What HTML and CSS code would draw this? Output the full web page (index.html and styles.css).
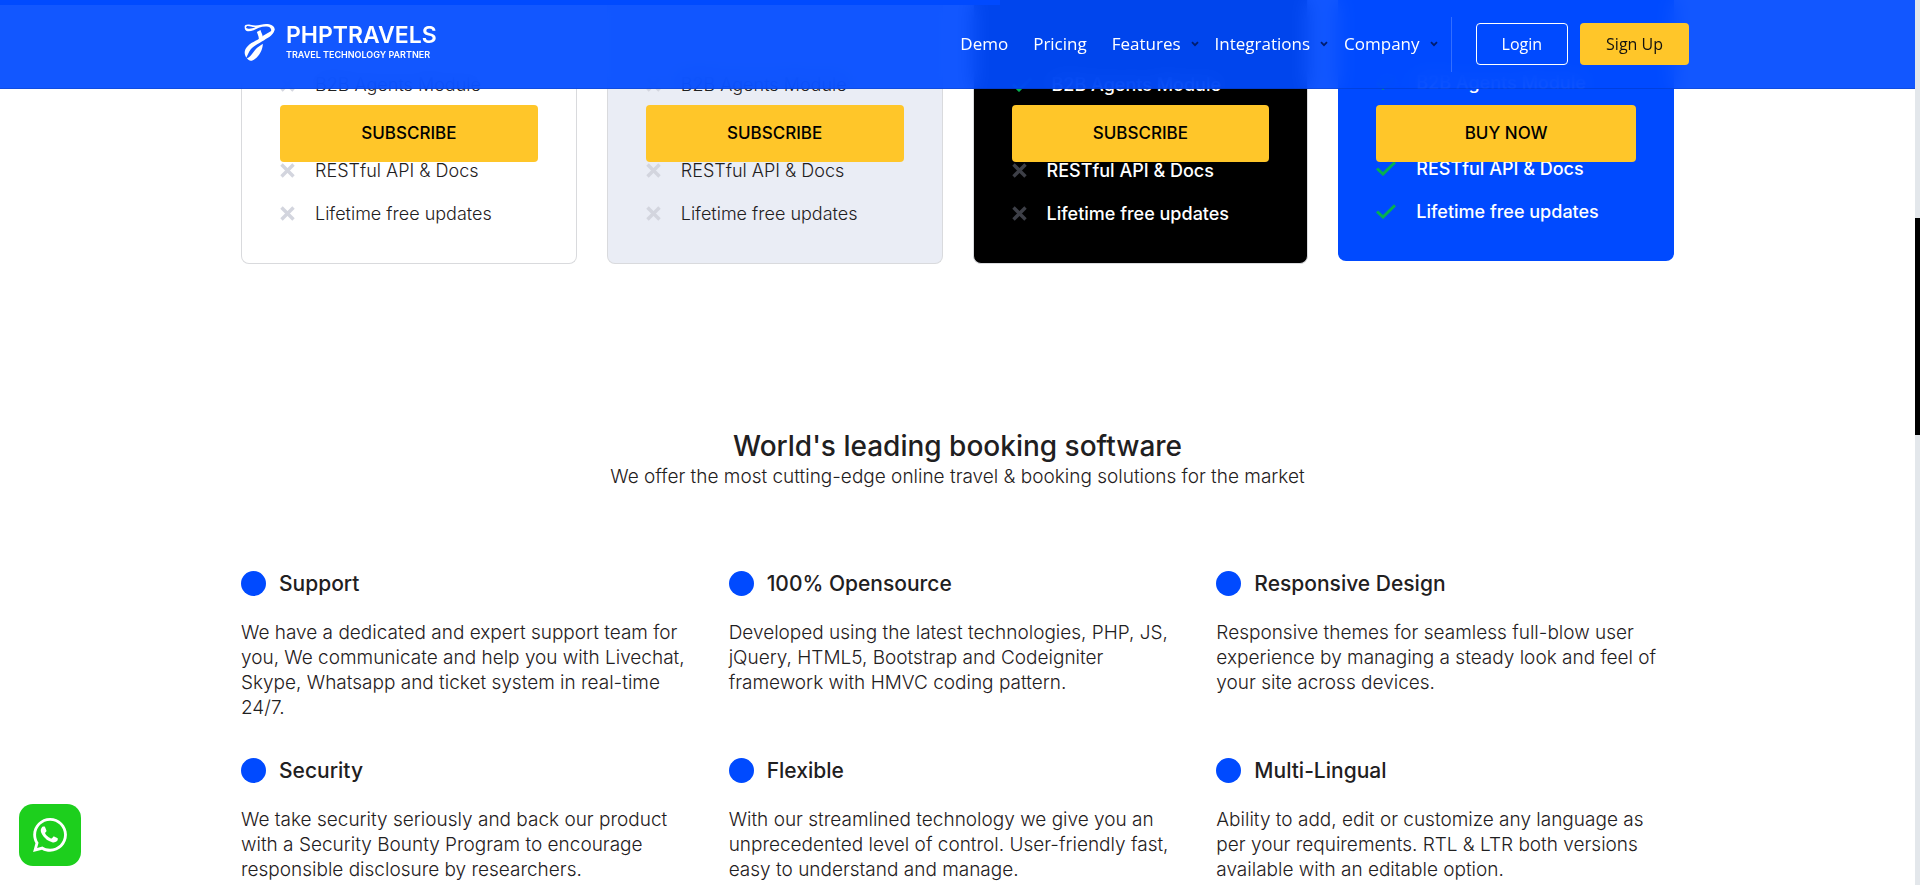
FILE: index.html
```html
<!DOCTYPE html>
<html lang="en">
<head>
<meta charset="utf-8">
<meta name="viewport" content="width=device-width, initial-scale=1">
<title>PHPTRAVELS</title>
<link rel="stylesheet" href="styles.css">
</head>
<body>
<svg class="sprite" aria-hidden="true">
  <symbol id="cross" viewBox="0 0 15 15"><path d="M1.5 1.5 13.500 13.500M13.500 1.500 1.500 13.500" stroke="currentColor" stroke-width="3.400" fill="none"/></symbol>
  <symbol id="check" viewBox="0 0 20 15"><path d="M1 7.500 7 13 19 1.200" stroke="currentColor" stroke-width="3" fill="none"/></symbol>
  <symbol id="chevron" viewBox="0 0 8 6"><path d="M1 1.200 4 4.200 7 1.200" stroke="currentColor" stroke-width="1.800" fill="none"/></symbol>
</svg>

<header class="header">
  <div class="progress"></div>
  <div class="header-inner">
    <a class="logo" href="#">
      <svg class="logo-mark" viewBox="13 14 94 114" aria-hidden="true">
        <path fill="#fff" fill-rule="evenodd" d="M15 24C14 17 22 15 32 17C44 20 52 20 64 17C84 12 104 16 106 30C104 40 98 46 88 48C96 40 98 32 92 26C86 21 70 22 58 26C46 31 36 38 24 37C17 36 15 30 15 24ZM19 26C26 32 38 29 48 24C38 25 30 20 22 21Z"/>
        <path fill="#fff" d="M52 39L63 33C66 44 72 50 69 60L57 66C60 58 56 50 52 39Z"/>
        <path fill="#fff" d="M106 30C104 48 88 55 74 64C56 75 34 84 26 104L20 117C12 104 14 92 24 82C38 68 58 64 72 50Z"/>
        <path fill="#fff" d="M70 75C70 92 60 112 46 121C38 128 28 129 22 119C37 112 42 96 54 86Z"/>
      </svg>
      <span class="logo-text"><span class="logo-name">PHPTRAVELS</span><span class="logo-tag">TRAVEL TECHNOLOGY PARTNER</span></span>
    </a>
    <nav class="nav">
      <a href="#">Demo</a>
      <a href="#">Pricing</a>
      <a href="#" class="has-menu">Features <svg class="chevron"><use href="#chevron"/></svg></a>
      <a href="#" class="has-menu">Integrations <svg class="chevron"><use href="#chevron"/></svg></a>
      <a href="#" class="has-menu">Company <svg class="chevron"><use href="#chevron"/></svg></a>
    </nav>
    <div class="account">
      <a class="btn btn-login" href="#">Login</a>
      <a class="btn btn-signup" href="#">Sign Up</a>
    </div>
  </div>
</header>

<main class="container">
  <section class="plans">
    <article class="plan">
      <ul class="plan-list">
        <li><svg class="cross"><use href="#cross"/></svg>B2B Agents Module</li>
        <li class="after-button"><svg class="cross"><use href="#cross"/></svg>RESTful API &amp; Docs</li>
        <li><svg class="cross"><use href="#cross"/></svg>Lifetime free updates</li>
      </ul>
      <button class="plan-button" type="button">SUBSCRIBE</button>
    </article>
    <article class="plan plan-soft">
      <ul class="plan-list">
        <li><svg class="cross"><use href="#cross"/></svg>B2B Agents Module</li>
        <li class="after-button"><svg class="cross"><use href="#cross"/></svg>RESTful API &amp; Docs</li>
        <li><svg class="cross"><use href="#cross"/></svg>Lifetime free updates</li>
      </ul>
      <button class="plan-button" type="button">SUBSCRIBE</button>
    </article>
    <article class="plan plan-dark">
      <ul class="plan-list">
        <li><svg class="check"><use href="#check"/></svg>B2B Agents Module</li>
        <li class="after-button"><svg class="cross"><use href="#cross"/></svg>RESTful API &amp; Docs</li>
        <li><svg class="cross"><use href="#cross"/></svg>Lifetime free updates</li>
      </ul>
      <button class="plan-button" type="button">SUBSCRIBE</button>
    </article>
    <article class="plan plan-blue">
      <ul class="plan-list">
        <li><svg class="check"><use href="#check"/></svg>B2B Agents Module</li>
        <li class="after-button"><svg class="check"><use href="#check"/></svg>RESTful API &amp; Docs</li>
        <li><svg class="check"><use href="#check"/></svg>Lifetime free updates</li>
      </ul>
      <button class="plan-button" type="button">BUY NOW</button>
    </article>
  </section>

  <section class="intro">
    <h2>World's leading booking software</h2>
    <p>We offer the most cutting-edge online travel &amp; booking solutions for the market</p>
  </section>

  <section class="features">
    <article class="feature"><h3>Support</h3>
      <p>We have a dedicated and expert support team for<br>you, We communicate and help you with Livechat,<br>Skype, Whatsapp and ticket system in real-time<br>24/7.</p></article>
    <article class="feature"><h3>100% Opensource</h3>
      <p>Developed using the latest technologies, PHP, JS,<br>jQuery, HTML5, Bootstrap and Codeigniter<br>framework with HMVC coding pattern.</p></article>
    <article class="feature"><h3>Responsive Design</h3>
      <p>Responsive themes for seamless full-blow user<br>experience by managing a steady look and feel of<br>your site across devices.</p></article>
    <article class="feature"><h3>Security</h3>
      <p>We take security seriously and back our product<br>with a Security Bounty Program to encourage<br>responsible disclosure by researchers.</p></article>
    <article class="feature"><h3>Flexible</h3>
      <p>With our streamlined technology we give you an<br>unprecedented level of control. User-friendly fast,<br>easy to understand and manage.</p></article>
    <article class="feature"><h3>Multi-Lingual</h3>
      <p>Ability to add, edit or customize any language as<br>per your requirements. RTL &amp; LTR both versions<br>available with an editable option.</p></article>
  </section>
</main>

<a class="whatsapp" href="#" aria-label="WhatsApp">
  <svg viewBox="0 0 24 24" aria-hidden="true"><path fill="#fff" d="M.057 24l1.687-6.163c-1.041-1.804-1.588-3.849-1.587-5.946.003-6.556 5.338-11.891 11.893-11.891 3.181.001 6.167 1.240 8.413 3.488 2.245 2.248 3.481 5.236 3.480 8.414-.003 6.557-5.338 11.892-11.893 11.892-1.990-.001-3.951-.5-5.688-1.448l-6.305 1.654zm6.597-3.807c1.676.995 3.276 1.591 5.392 1.592 5.448 0 9.886-4.434 9.889-9.885.002-5.462-4.415-9.890-9.881-9.892-5.452 0-9.887 4.434-9.889 9.884-.001 2.225.651 3.891 1.746 5.634l-.999 3.648 3.742-.981zM17.500 14.380c-.07-.12-.27-.2-.57-.35-.3-.15-1.760-.87-2.030-.97-.27-.1-.47-.15-.67.15-.2.3-.77.97-.94 1.160-.17.2-.35.22-.64.07-.3-.15-1.260-.46-2.390-1.480-.88-.79-1.480-1.760-1.650-2.060-.17-.3-.02-.46.13-.61.13-.13.300-.35.45-.52.15-.17.200-.3.300-.5.100-.2.050-.37-.03-.52-.07-.15-.67-1.610-.92-2.210-.24-.58-.49-.5-.67-.51l-.57-.01c-.2 0-.52.07-.79.37-.27.3-1.040 1.020-1.040 2.480s1.070 2.880 1.210 3.070c.15.2 2.100 3.200 5.080 4.490.71.310 1.260.49 1.690.63.71.23 1.360.2 1.870.12.57-.09 1.760-.72 2.010-1.410.25-.69.25-1.290.17-1.410z"/></svg>
</a>
<div class="scrollbar"><div class="scrollbar-thumb"></div></div>
</body>
</html>
```
FILE: styles.css
```css
:root {
  --blue: #004aff;
  --yellow: #ffc629;
  --ink: #1f2021;
  --rail: 5px;
}

* { box-sizing: border-box; }

body {
  margin: 0;
  padding-right: var(--rail);
  background: #fff;
  color: var(--ink);
  font: 300 19px/25px Inter, sans-serif;
  overflow: hidden;
}

a { color: inherit; text-decoration: none; }
h2, h3, p, ul { margin: 0; padding: 0; }

.sprite { display: none; }

/* Header */
.header {
  position: fixed;
  inset: 0 var(--rail) auto 0;
  z-index: 10;
  border-bottom: 1px solid rgba(0, 0, 0, .12);
  background: rgba(0, 74, 255, .93);
  backdrop-filter: blur(10px);
  color: #fff;
}
.progress {
  width: 52.2%;
  height: 5px;
  background: var(--blue);
}
.header-inner {
  display: flex;
  align-items: center;
  max-width: 1463px;
  height: 83px;
  margin: 0 auto;
  padding: 0 0 5px 18px;
}
.logo {
  display: flex;
  align-items: center;
  gap: 11px;
  margin-right: auto;
  padding-bottom: 4px;
}
.logo-mark { width: 31px; height: 39px; }
.logo-text { display: flex; flex-direction: column; }
.logo-name { font-size: 23px; font-weight: 600; line-height: 25px; }
.logo-tag { font-size: 9px; font-weight: 600; line-height: 14px; }

.nav {
  display: flex;
  gap: 25px;
  font: 400 17px/24px "Open Sans", sans-serif;
}
.has-menu { display: flex; align-items: center; gap: 10px; }
.has-menu + .has-menu { margin-left: -9px; }
.chevron { width: 8px; height: 6px; color: #001d70; }

.account {
  display: flex;
  align-items: center;
  gap: 12px;
  margin-left: 13px;
  padding-left: 24px;
  border-left: 1px solid rgba(255, 255, 255, .2);
  height: 55px;
}
.btn {
  height: 42px;
  padding: 0 25px;
  border: 1px solid transparent;
  border-radius: 4px;
  font: 400 16px/40px "Open Sans", sans-serif;
}
.btn-login { border-color: #fff; }
.btn-signup { background: var(--yellow); color: #111; }

/* Shared page column */
.container {
  max-width: 1463px;
  margin: 0 auto;
  padding: 0 15px;
}

/* Pricing cards */
.plans {
  display: grid;
  grid-template-columns: repeat(4, 1fr);
  align-items: start;
  gap: 30px;
}
.plan {
  position: relative;
  padding: 63px 38px 28px;
  border: 1px solid #d9dadd;
  border-top: 0;
  border-radius: 0 0 8px 8px;
  font-size: 18px;
}
.plan-soft { background: #eaedf5; }
.plan-dark { background: #000; color: #fff; font-weight: 500; }
.plan-blue {
  padding-top: 61px;
  border: 0;
  background: var(--blue);
  color: #fff;
  font-weight: 500;
}
.plan-list { list-style: none; }
.plan-list li {
  display: flex;
  align-items: center;
  gap: 20px;
  height: 43px;
}
.plan-list .after-button { margin-top: 43px; }
.cross { width: 15px; height: 15px; color: #d3d5de; }
.plan-dark .cross { color: #3d3f47; }
.check { width: 20px; height: 15px; color: #06b050; }
.plan-button {
  position: absolute;
  inset: 105px 38px auto;
  height: 57px;
  border: 0;
  border-radius: 4px;
  background: var(--yellow);
  color: #000;
  font: 500 17px/25px Inter, sans-serif;
}

/* Section intro */
.intro { margin-top: 164px; text-align: center; }
.intro h2 { font-size: 28px; font-weight: 500; line-height: 36px; }

/* Feature grid */
.features {
  display: grid;
  grid-template-columns: repeat(3, 1fr);
  gap: 38px 30px;
  margin-top: 82px;
}
.feature h3 {
  display: flex;
  align-items: center;
  gap: 13px;
  margin-bottom: 24px;
  font-size: 21px;
  font-weight: 500;
  line-height: 25px;
}
.feature h3::before {
  content: "";
  width: 25px;
  height: 25px;
  border-radius: 50%;
  background: var(--blue);
}
.feature p { white-space: nowrap; }

/* Chat launcher */
.whatsapp {
  position: fixed;
  left: 19px;
  bottom: 19px;
  display: grid;
  place-items: center;
  width: 62px;
  height: 62px;
  border-radius: 14px;
  background: #1dcf1d;
}
.whatsapp svg { width: 34px; height: 34px; }

/* Scroll rail */
.scrollbar {
  position: fixed;
  inset: 0 0 0 auto;
  width: var(--rail);
  background: #e3e7eb;
  padding-top: 218px;
}
.scrollbar-thumb { height: 217px; background: #000; }
```
